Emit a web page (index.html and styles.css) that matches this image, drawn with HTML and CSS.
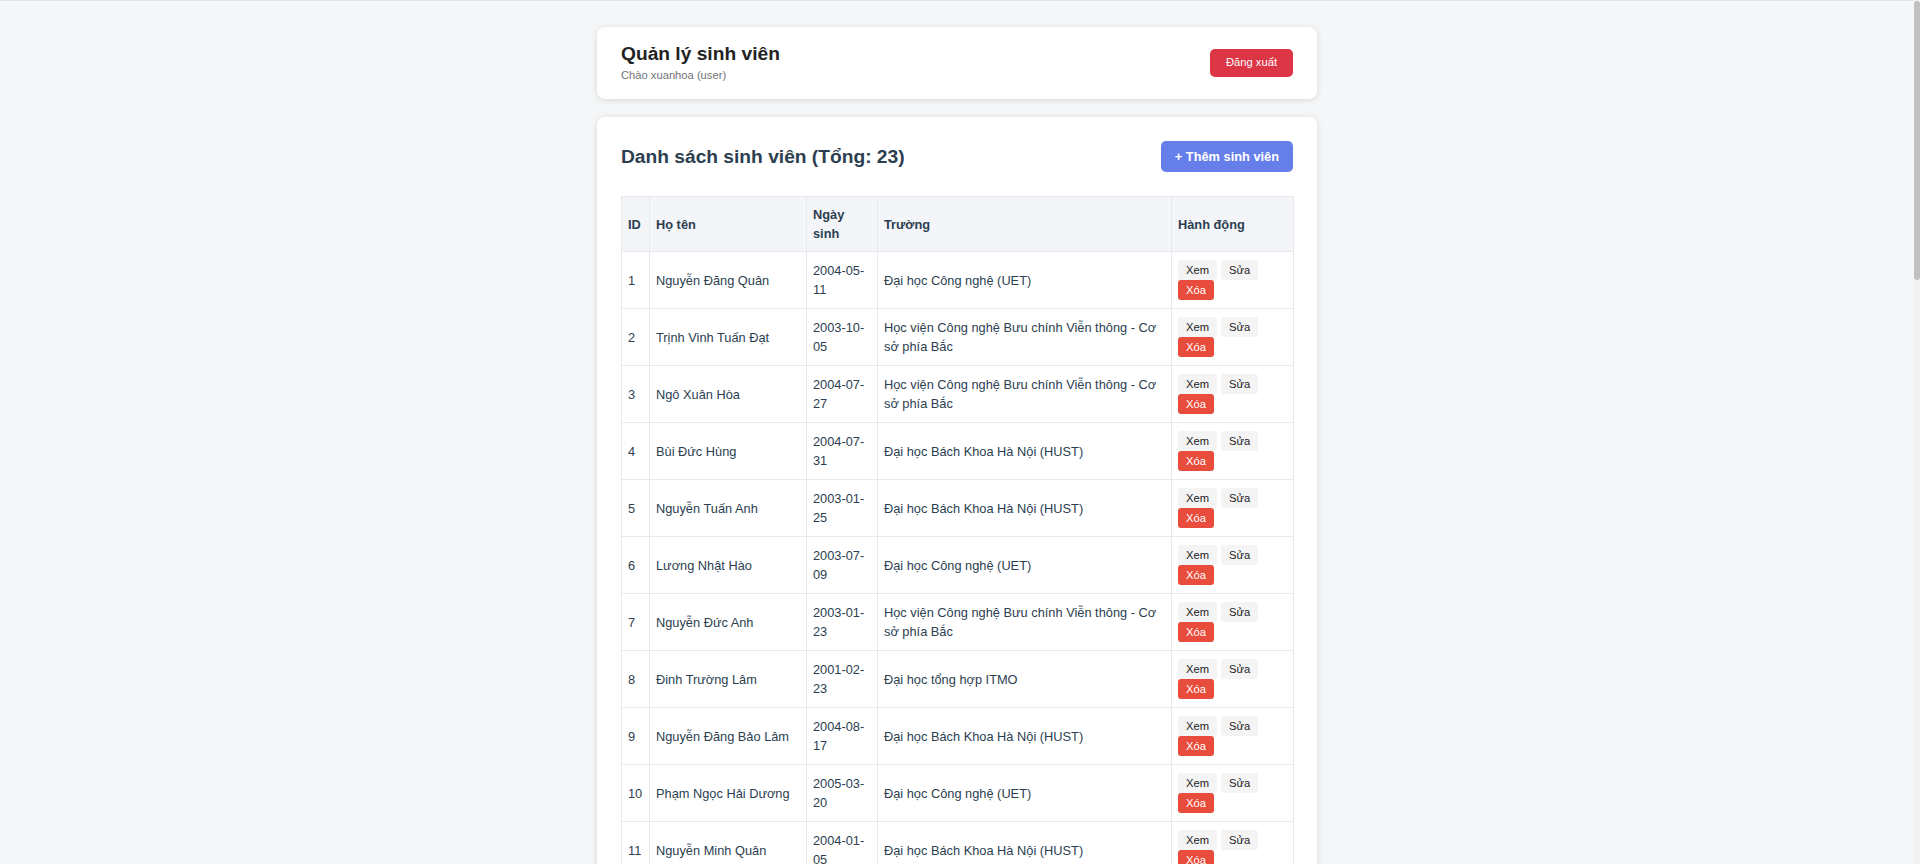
FILE: index.html
```html
<!DOCTYPE html>
<html lang="vi">
<head>
<meta charset="utf-8">
<title>Quản lý sinh viên</title>
<link rel="stylesheet" href="styles.css">
</head>
<body>
<div class="container">
  <header class="card top-card">
    <div class="brand">
      <h1 class="app-title">Quản lý sinh viên</h1>
      <p class="greeting">Chào xuanhoa (user)</p>
    </div>
    <button class="btn btn-logout">Đăng xuất</button>
  </header>

  <main class="card list-card">
    <div class="list-head">
      <h2 class="list-title">Danh sách sinh viên (Tổng: 23)</h2>
      <button class="btn btn-add">+ Thêm sinh viên</button>
    </div>
    <table class="student-table">
      <colgroup>
        <col class="c-id"><col class="c-name"><col class="c-dob"><col class="c-school"><col class="c-act">
      </colgroup>
      <thead>
        <tr><th>ID</th><th>Họ tên</th><th>Ngày sinh</th><th>Trường</th><th>Hành động</th></tr>
      </thead>
      <tbody>
        <tr><td>1</td><td>Nguyễn Đăng Quân</td><td>2004-05-11</td><td>Đại học Công nghệ (UET)</td><td><div class="actions"><button class="act">Xem</button><button class="act">Sửa</button><button class="act del">Xóa</button></div></td></tr>
        <tr><td>2</td><td>Trịnh Vinh Tuấn Đạt</td><td>2003-10-05</td><td>Học viện Công nghệ Bưu chính Viễn thông - Cơ sở phía Bắc</td><td><div class="actions"><button class="act">Xem</button><button class="act">Sửa</button><button class="act del">Xóa</button></div></td></tr>
        <tr><td>3</td><td>Ngô Xuân Hòa</td><td>2004-07-27</td><td>Học viện Công nghệ Bưu chính Viễn thông - Cơ sở phía Bắc</td><td><div class="actions"><button class="act">Xem</button><button class="act">Sửa</button><button class="act del">Xóa</button></div></td></tr>
        <tr><td>4</td><td>Bùi Đức Hùng</td><td>2004-07-31</td><td>Đại học Bách Khoa Hà Nội (HUST)</td><td><div class="actions"><button class="act">Xem</button><button class="act">Sửa</button><button class="act del">Xóa</button></div></td></tr>
        <tr><td>5</td><td>Nguyễn Tuấn Anh</td><td>2003-01-25</td><td>Đại học Bách Khoa Hà Nội (HUST)</td><td><div class="actions"><button class="act">Xem</button><button class="act">Sửa</button><button class="act del">Xóa</button></div></td></tr>
        <tr><td>6</td><td>Lương Nhật Hào</td><td>2003-07-09</td><td>Đại học Công nghệ (UET)</td><td><div class="actions"><button class="act">Xem</button><button class="act">Sửa</button><button class="act del">Xóa</button></div></td></tr>
        <tr><td>7</td><td>Nguyễn Đức Anh</td><td>2003-01-23</td><td>Học viện Công nghệ Bưu chính Viễn thông - Cơ sở phía Bắc</td><td><div class="actions"><button class="act">Xem</button><button class="act">Sửa</button><button class="act del">Xóa</button></div></td></tr>
        <tr><td>8</td><td>Đinh Trường Lâm</td><td>2001-02-23</td><td>Đại học tổng hợp ITMO</td><td><div class="actions"><button class="act">Xem</button><button class="act">Sửa</button><button class="act del">Xóa</button></div></td></tr>
        <tr><td>9</td><td>Nguyễn Đăng Bảo Lâm</td><td>2004-08-17</td><td>Đại học Bách Khoa Hà Nội (HUST)</td><td><div class="actions"><button class="act">Xem</button><button class="act">Sửa</button><button class="act del">Xóa</button></div></td></tr>
        <tr><td>10</td><td>Phạm Ngọc Hải Dương</td><td>2005-03-20</td><td>Đại học Công nghệ (UET)</td><td><div class="actions"><button class="act">Xem</button><button class="act">Sửa</button><button class="act del">Xóa</button></div></td></tr>
        <tr><td>11</td><td>Nguyễn Minh Quân</td><td>2004-01-05</td><td>Đại học Bách Khoa Hà Nội (HUST)</td><td><div class="actions"><button class="act">Xem</button><button class="act">Sửa</button><button class="act del">Xóa</button></div></td></tr>
      </tbody>
    </table>
  </main>
</div>
<div class="scrollbar" aria-hidden="true"><div class="scroll-thumb"></div></div>
</body>
</html>
```
FILE: styles.css
```css
* { box-sizing: border-box; }

html::-webkit-scrollbar { width: 0; }

body {
  margin: 0;
  padding-right: 6px;
  background: #f5f6f8;
  border-top: 1px solid #e2e3e5;
  font-family: "Liberation Sans", Arial, sans-serif;
  color: #2c3e50;
}

.scrollbar {
  position: fixed;
  top: 0;
  right: 0;
  width: 6px;
  height: 100vh;
  background: #f1f1f1;
}

.scroll-thumb {
  margin-top: 1px;
  height: 279px;
  border-radius: 3px;
  background: #c1c1c1;
}

.container {
  max-width: 720px;
  margin: 0 auto;
  padding: 26px 0 24px;
  display: flex;
  flex-direction: column;
  gap: 18px;
}

.card {
  background: #ffffff;
  border-radius: 8px;
  box-shadow: 0 1px 6px rgba(0, 0, 0, 0.12);
}

.top-card {
  display: flex;
  align-items: center;
  justify-content: space-between;
  padding: 16px 24px 17px;
}

.app-title {
  margin: 0;
  font-size: 19.2px;
  font-weight: 700;
  line-height: 22px;
  color: #222;
}

.greeting {
  margin: 4px 0 0;
  font-size: 11.2px;
  line-height: 13px;
  color: #6f7378;
}

.btn {
  border: none;
  font-family: inherit;
  color: #fff;
  cursor: pointer;
}

.btn-logout {
  background: #dc3545;
  border-radius: 5px;
  font-size: 11.2px;
  line-height: 13px;
  padding: 7px 16px 8px;
}

.list-card {
  padding: 24px;
}

.list-head {
  display: flex;
  align-items: center;
  justify-content: space-between;
  margin-bottom: 24px;
}

.list-title {
  margin: 0;
  font-size: 19.2px;
  font-weight: 700;
  line-height: 22px;
  color: #2c3e50;
}

.btn-add {
  background: #667eea;
  border-radius: 5px;
  font-size: 12.8px;
  font-weight: 700;
  line-height: 15px;
  padding: 8px 14px;
}

.student-table {
  width: 100%;
  table-layout: fixed;
  border-collapse: collapse;
  font-size: 12.8px;
  line-height: 1.5;
}

.c-id { width: 28px; }
.c-name { width: 157px; }
.c-dob { width: 71px; }
.c-school { width: 294px; }
.c-act { width: 122px; }

.student-table th,
.student-table td {
  border: 1px solid #e8e9ec;
  padding: 8px 6px;
  text-align: left;
  vertical-align: middle;
  color: #2c3e50;
}

.student-table th {
  background: #f4f5f9;
  font-weight: 700;
}

.actions {
  display: flex;
  flex-wrap: wrap;
  column-gap: 4px;
}

.act {
  border: none;
  border-radius: 3px;
  background: #f4f4f5;
  color: #222;
  font-family: inherit;
  font-size: 11.2px;
  line-height: 14px;
  padding: 3px 8px;
  cursor: pointer;
}

.act.del {
  background: #e74c3c;
  color: #fff;
}
```
